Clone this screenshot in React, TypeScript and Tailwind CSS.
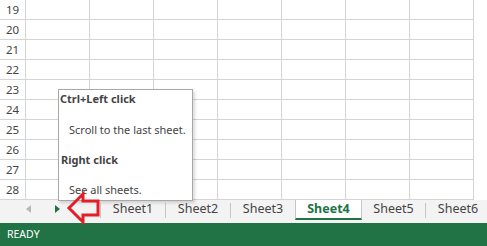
const rows = [19, 20, 21, 22, 23, 24, 25, 26, 27, 28];
const cols = [0, 1, 2, 3, 4, 5, 6];

function Grid() {
  return (
    <div className="h-[200px] overflow-hidden bg-white">
      {rows.map((r) => (
        <div key={r} className="flex h-[20px]">
          <div className="flex w-[26px] shrink-0 items-center justify-center border-b border-r border-[#d4d4d4] text-[11.5px] text-[#444]">
            {r}
          </div>
          {cols.map((c) => (
            <div key={c} className="w-[64px] shrink-0 border-b border-r border-[#d4d4d4]" />
          ))}
        </div>
      ))}
    </div>
  );
}

function Tab({ name }: { name: string }) {
  return (
    <>
      <div className="mt-[3px] h-[15px] w-px shrink-0 bg-[#c6c6c6]" />
      <div className="flex h-[18px] w-[64px] shrink-0 items-center justify-center text-[12.5px] text-[#444]">
        {name}
      </div>
    </>
  );
}

function TabBar() {
  return (
    <div className="flex h-[23px] bg-[#f3f3f3]">
      <div className="flex h-[18px] w-[100px] shrink-0 items-center">
        <svg width="6" height="8" viewBox="0 0 6 8" className="ml-[26px]">
          <polygon points="5,0 5,8 0,4" fill="#b8b8b8" />
        </svg>
        <svg width="6" height="8" viewBox="0 0 6 8" className="ml-[23px]">
          <polygon points="0,0 0,8 5,4" fill="#217346" />
        </svg>
      </div>
      <Tab name="Sheet1" />
      <Tab name="Sheet2" />
      <Tab name="Sheet3" />
      <div className="flex h-[20px] w-[67px] shrink-0 items-center justify-center border-x border-b-2 border-x-[#c6c6c6] border-b-[#217346] bg-white text-[12.5px] font-bold text-[#217346]">
        Sheet4
      </div>
      <div className="flex h-[18px] w-[63px] shrink-0 items-center justify-center text-[12.5px] text-[#444]">
        Sheet5
      </div>
      <Tab name="Sheet6" />
    </div>
  );
}

export default function App() {
  return (
    <div
      className="relative h-[246px] w-[487px] overflow-hidden bg-white"
      style={{ fontFamily: '"Noto Sans", "Open Sans", sans-serif' }}
    >
      <Grid />
      <TabBar />
      <div className="flex h-[23px] items-center bg-[#217346] pl-[7px] text-[10.5px] text-white">
        READY
      </div>

      {/* tooltip */}
      <div className="absolute left-[58px] top-[89px] h-[112px] w-[135px] border border-[#a8a8a8] bg-white text-[11px] leading-[15px] text-[#444] shadow-[2px_2px_3px_rgba(0,0,0,0.15)]">
        <div className="pl-[1px] pt-[1px] font-bold">Ctrl+Left click</div>
        <div className="pl-[10px] pt-[16px]">Scroll to the last sheet.</div>
        <div className="pl-[2px] pt-[15px] font-bold">Right click</div>
        <div className="pl-[10px] pt-[15px]">See all sheets.</div>
      </div>

      {/* red annotation arrow */}
      <svg className="absolute left-[60px] top-[188px]" width="45" height="40" viewBox="0 0 45 40">
        <polygon
          points="9,20 23,6 23,13 38,13 38,27 23,27 23,34"
          fill="none"
          stroke="#e21f26"
          strokeWidth="3"
          strokeLinejoin="miter"
        />
      </svg>
    </div>
  );
}
